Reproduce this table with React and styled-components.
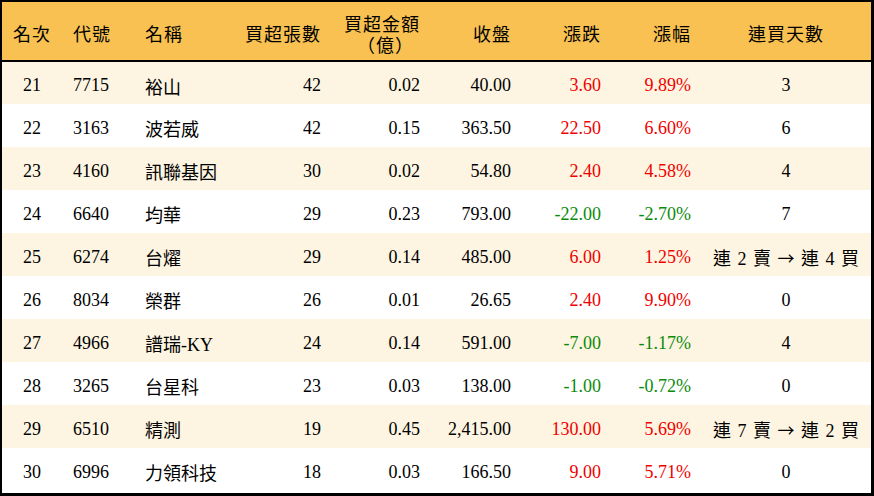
import React from 'react';
import styled, { createGlobalStyle } from 'styled-components';

const GlobalStyle = createGlobalStyle`
  html, body {
    margin: 0;
    padding: 0;
    background: #ffffff;
  }
  body {
    font-family: "Liberation Serif", "Noto Sans CJK TC", serif;
  }
`;

// column widths and how each column aligns its text
const columns = [
  { key: 'rank', label: ['名次'], width: 60, align: 'center' },
  { key: 'code', label: ['代號'], width: 72, align: 'left' },
  { key: 'name', label: ['名稱'], width: 92, align: 'left' },
  { key: 'lots', label: ['買超張數'], width: 105, align: 'right' },
  { key: 'amount', label: ['買超金額', '（億）'], width: 99, align: 'right' },
  { key: 'close', label: ['收盤'], width: 91, align: 'right' },
  { key: 'change', label: ['漲跌'], width: 90, align: 'right' },
  { key: 'pct', label: ['漲幅'], width: 90, align: 'right' },
  { key: 'days', label: ['連買天數'], width: 170, align: 'center' },
];

const rows = [
  { rank: 21, code: '7715', name: '裕山', lots: 42, amount: '0.02', close: '40.00', change: '3.60', pct: '9.89%', days: '3' },
  { rank: 22, code: '3163', name: '波若威', lots: 42, amount: '0.15', close: '363.50', change: '22.50', pct: '6.60%', days: '6' },
  { rank: 23, code: '4160', name: '訊聯基因', lots: 30, amount: '0.02', close: '54.80', change: '2.40', pct: '4.58%', days: '4' },
  { rank: 24, code: '6640', name: '均華', lots: 29, amount: '0.23', close: '793.00', change: '-22.00', pct: '-2.70%', days: '7' },
  { rank: 25, code: '6274', name: '台燿', lots: 29, amount: '0.14', close: '485.00', change: '6.00', pct: '1.25%', days: ['連 2 賣', '連 4 買'] },
  { rank: 26, code: '8034', name: '榮群', lots: 26, amount: '0.01', close: '26.65', change: '2.40', pct: '9.90%', days: '0' },
  { rank: 27, code: '4966', name: '譜瑞-KY', lots: 24, amount: '0.14', close: '591.00', change: '-7.00', pct: '-1.17%', days: '4' },
  { rank: 28, code: '3265', name: '台星科', lots: 23, amount: '0.03', close: '138.00', change: '-1.00', pct: '-0.72%', days: '0' },
  { rank: 29, code: '6510', name: '精測', lots: 19, amount: '0.45', close: '2,415.00', change: '130.00', pct: '5.69%', days: ['連 7 賣', '連 2 買'] },
  { rank: 30, code: '6996', name: '力領科技', lots: 18, amount: '0.03', close: '166.50', change: '9.00', pct: '5.71%', days: '0' },
];

const Frame = styled.div`
  width: 874px;
  height: 496px;
  box-sizing: border-box;
  border-style: solid;
  border-color: #000000;
  border-width: 2px 3px 3px 2px;
  overflow: hidden;
`;

const Table = styled.table`
  width: 869px;
  table-layout: fixed;
  border-collapse: collapse;
  font-size: 18px;
  color: #000000;
`;

const HeadRow = styled.tr`
  background: #f8c152;
  height: 59px;
  border-bottom: 2px solid #000000;
`;

const HeadCell = styled.th`
  font-weight: 400;
  line-height: 21px;
  letter-spacing: 1px;
  padding: 9px ${p => (p.$align === 'center' ? 0 : 10)}px 0 ${p => (p.$align === 'center' ? 0 : 11)}px;
  text-align: ${p => p.$align};
  vertical-align: middle;
  white-space: nowrap;
`;

const SubLabel = styled.div`
  padding-right: 6px;
`;

const BodyRow = styled.tr`
  height: 43px;
  background: ${p => (p.$striped ? '#fdf5e2' : '#ffffff')};
`;

const Cell = styled.td`
  padding: 5px ${p => (p.$align === 'center' ? 0 : 10)}px 0 ${p => (p.$align === 'center' ? 0 : 11)}px;
  text-align: ${p => p.$align};
  vertical-align: middle;
  white-space: nowrap;
  word-spacing: ${p => (p.$spaced ? '2px' : 'normal')};
  color: ${p => (p.$tone === 'up' ? '#f00000' : p.$tone === 'down' ? '#0b8a0b' : 'inherit')};
`;

const Arrow = styled.span`
  font-family: "Noto Sans CJK TC", sans-serif;
  font-size: 17px;
`;

const toneOf = (value) => (value.startsWith('-') ? 'down' : 'up');

const renderValue = (value) => {
  if (Array.isArray(value)) {
    return (
      <>
        {value[0]} <Arrow>→</Arrow> {value[1]}
      </>
    );
  }
  return String(value);
};

export default function App() {
  return (
    <>
      <GlobalStyle />
      <Frame>
        <Table>
          <colgroup>
            {columns.map(col => (
              <col key={col.key} style={{ width: col.width }} />
            ))}
          </colgroup>
          <thead>
            <HeadRow>
              {columns.map(col => (
                <HeadCell key={col.key} $align={col.align}>
                  <div>{col.label[0]}</div>
                  {col.label[1] && <SubLabel>{col.label[1]}</SubLabel>}
                </HeadCell>
              ))}
            </HeadRow>
          </thead>
          <tbody>
            {rows.map((row, i) => {
              return (
                <BodyRow key={row.rank} $striped={i % 2 === 0}>
                  {columns.map(col => {
                    const value = row[col.key];
                    const tone = col.key === 'change' || col.key === 'pct' ? toneOf(value) : null;
                    return (
                      <Cell key={col.key} $align={col.align} $tone={tone} $spaced={col.key === 'days'}>
                        {renderValue(value)}
                      </Cell>
                    );
                  })}
                </BodyRow>
              );
            })}
          </tbody>
        </Table>
      </Frame>
    </>
  );
}
